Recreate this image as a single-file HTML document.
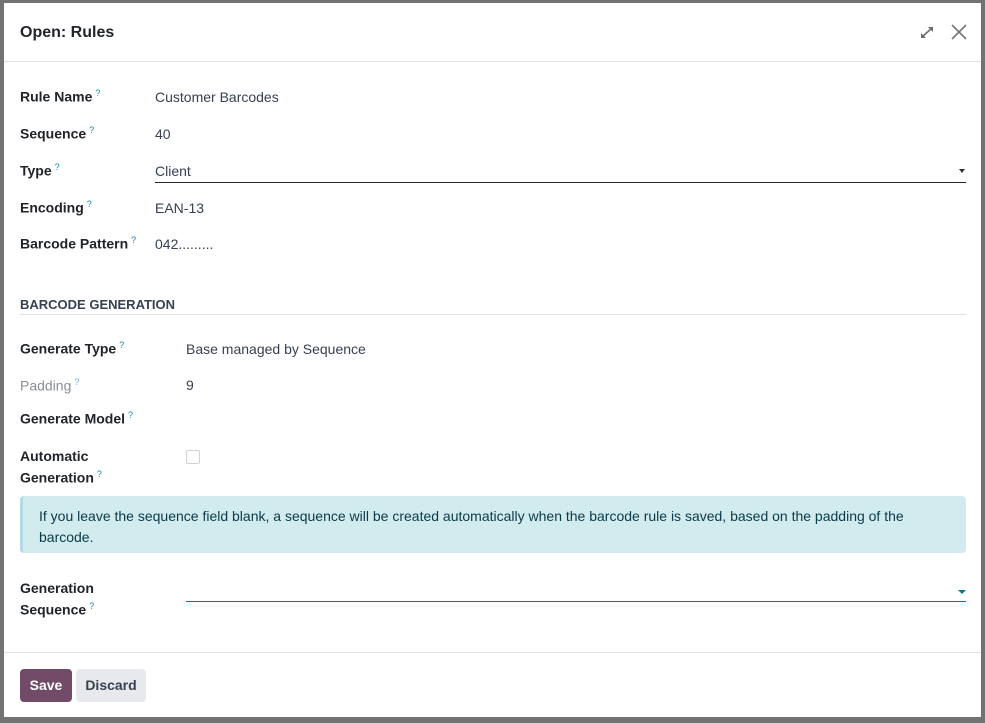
<!DOCTYPE html>
<html><head><meta charset="utf-8"><style>
*{margin:0;padding:0;box-sizing:border-box}
body{width:985px;height:723px;background:#737373;font-family:"Liberation Sans",sans-serif;position:relative;overflow:hidden;color:#212529}
.m{position:absolute;left:4px;top:3px;width:977px;height:714px;background:#fff}
.a{position:absolute;white-space:nowrap;font-size:14px}
.l{font-weight:bold;color:#212529}
.q{color:#0d88b5;font-size:9px;vertical-align:super;font-weight:normal;margin-left:3px}
.v{color:#374151}
.hr{position:absolute;height:1px;background:#dee2e6}
</style></head><body>
<div class="m"></div>
<div class="a" style="left:20px;top:24px;font-size:16px;font-weight:bold;color:#212529">Open: Rules</div>
<svg style="position:absolute;left:920px;top:26px" width="14" height="13" viewBox="0 0 14 13"><path d="M2 11 L12 2" stroke="#6b6b6b" stroke-width="1.6"/><path d="M8 1 H13 V6Z M1 7 V12 H6Z" fill="#6b6b6b"/></svg>
<svg style="position:absolute;left:951px;top:24px" width="16" height="16" viewBox="0 0 16 16"><path d="M1 1 L15 15 M15 1 L1 15" stroke="#777" stroke-width="1.6"/></svg>
<div class="hr" style="left:4px;top:61px;width:977px"></div>

<div class="a l" style="left:20px;top:88px">Rule Name<span class="q">?</span></div>
<div class="a v" style="left:155px;top:89px">Customer Barcodes</div>
<div class="a l" style="left:20px;top:125px">Sequence<span class="q">?</span></div>
<div class="a v" style="left:155px;top:126px">40</div>
<div class="a l" style="left:20px;top:162px">Type<span class="q">?</span></div>
<div class="a v" style="left:155px;top:163px">Client</div>
<div style="position:absolute;left:155px;top:182px;width:811px;height:1px;background:#212529"></div>
<div style="position:absolute;left:959px;top:169px;border-left:3.5px solid transparent;border-right:3.5px solid transparent;border-top:4px solid #333"></div>
<div class="a l" style="left:20px;top:199px">Encoding<span class="q">?</span></div>
<div class="a v" style="left:155px;top:200px">EAN-13</div>
<div class="a l" style="left:20px;top:235px">Barcode Pattern<span class="q">?</span></div>
<div class="a v" style="left:155px;top:236px">042.........</div>

<div class="a" style="left:20px;top:297px;font-size:13px;font-weight:bold;color:#374151">BARCODE GENERATION</div>
<div class="hr" style="left:20px;top:314px;width:946px"></div>

<div class="a l" style="left:20px;top:340px">Generate Type<span class="q">?</span></div>
<div class="a v" style="left:186px;top:341px">Base managed by Sequence</div>
<div class="a" style="left:20px;top:377px;color:#8a8f94">Padding<span class="q" style="color:#6fb3cf">?</span></div>
<div class="a v" style="left:186px;top:377px">9</div>
<div class="a l" style="left:20px;top:410px">Generate Model<span class="q">?</span></div>
<div class="a l" style="left:20px;top:448px">Automatic</div>
<div class="a l" style="left:20px;top:469px">Generation<span class="q">?</span></div>
<div style="position:absolute;left:186px;top:450px;width:14px;height:14px;border:1px solid #d0d3d6;border-radius:2px"></div>

<div style="position:absolute;left:20px;top:496px;width:946px;height:57px;background:#d1ebef;border-left:3px solid #b0dbe4;border-radius:4px"></div>
<div class="a" style="left:39px;top:506px;color:#0b3a48;line-height:21px;white-space:normal;width:900px">If you leave the sequence field blank, a sequence will be created automatically when the barcode rule is saved, based on the padding of the barcode.</div>

<div class="a l" style="left:20px;top:580px">Generation</div>
<div class="a l" style="left:20px;top:601px">Sequence<span class="q">?</span></div>
<div style="position:absolute;left:186px;top:601px;width:780px;height:1px;background:#017e84"></div>
<div style="position:absolute;left:958px;top:590px;border-left:4px solid transparent;border-right:4px solid transparent;border-top:4px solid #017e84"></div>

<div class="hr" style="left:4px;top:652px;width:977px"></div>
<div style="position:absolute;left:20px;top:669px;width:52px;height:33px;background:#714b67;border-radius:4px;color:#fff;font-weight:bold;font-size:14px;text-align:center;line-height:33px">Save</div>
<div style="position:absolute;left:76px;top:669px;width:70px;height:33px;background:#e7e9ed;border-radius:4px;color:#374151;font-weight:bold;font-size:14px;text-align:center;line-height:33px">Discard</div>
</body></html>
